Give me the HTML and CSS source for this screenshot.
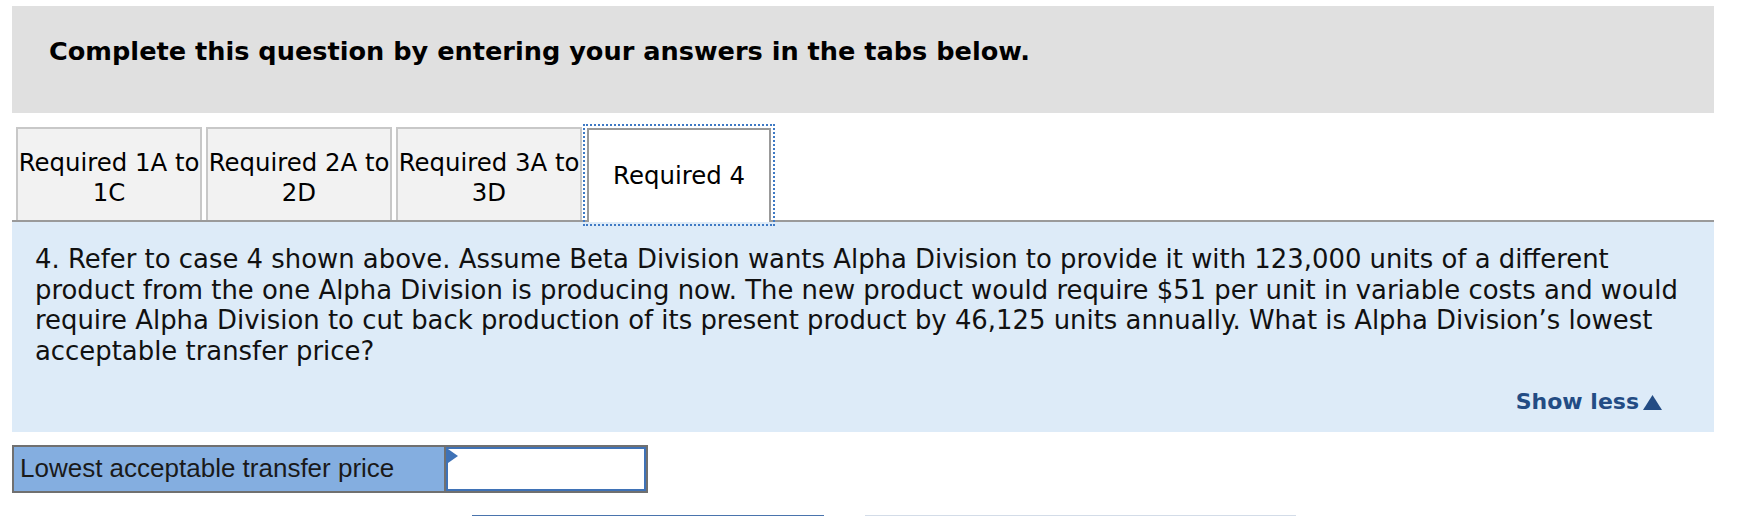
FILE: index.html
```html
<!DOCTYPE html>
<html lang="en">
<head>
<meta charset="utf-8">
<title>Required 4</title>
<link rel="stylesheet" href="styles.css">
</head>
<body>
<div class="page">
  <div class="header">Complete this question by entering your answers in the tabs below.</div>

  <div class="tabs">
    <div class="tab">Required 1A to<br>1C</div>
    <div class="tab">Required 2A to<br>2D</div>
    <div class="tab">Required 3A to<br>3D</div>
    <div class="tab tab-active">Required 4</div>
  </div>

  <div class="panel">
    <p class="question">4. Refer to case 4 shown above. Assume Beta Division wants Alpha Division to provide it with 123,000 units of a different<br>product from the one Alpha Division is producing now. The new product would require $51 per unit in variable costs and would<br>require Alpha Division to cut back production of its present product by 46,125 units annually. What is Alpha Division’s lowest<br>acceptable transfer price?</p>
    <div class="toggle"><span class="toggle-link">Show less<svg class="toggle-arrow" width="19" height="15" viewBox="0 0 19 15"><polygon points="9.5,0 19,15 0,15" fill="#234c84"/></svg></span></div>
  </div>

  <div class="answer">
    <div class="answer-label">Lowest acceptable transfer price</div>
    <div class="answer-cell">
      <input class="answer-input" type="text" aria-label="Lowest acceptable transfer price">
      <span class="answer-flag"></span>
    </div>
  </div>

  <div class="nav">
    <div class="nav-btn nav-prev"></div>
    <div class="nav-btn nav-next"></div>
  </div>
</div>
</body>
</html>
```

FILE: styles.css
```css
html, body {
  margin: 0;
  padding: 0;
  background: #ffffff;
}

body {
  font-family: "DejaVu Sans", Verdana, sans-serif;
  color: #111111;
}

.page {
  width: 1702px;
  padding: 6px 0 0 12px;
}

.header {
  box-sizing: border-box;
  height: 107px;
  background: #e0e0e0;
  padding: 30px 0 0 37px;
  font-size: 25.6px;
  line-height: 30px;
  font-weight: bold;
  color: #000000;
}

.tabs {
  display: flex;
  align-items: flex-end;
  box-sizing: content-box;
  height: 107px;
  padding-left: 4px;
  gap: 4px;
  border-bottom: 2px solid #9a9a9a;
}

.tab {
  box-sizing: border-box;
  width: 186px;
  height: 93px;
  padding-top: 6px;
  background: #f2f2f2;
  border: 2px solid #c8c8c8;
  border-bottom: 0;
  display: flex;
  align-items: center;
  justify-content: center;
  text-align: center;
  white-space: nowrap;
  font-size: 24.4px;
  line-height: 30px;
  color: #000000;
}

.tab-active {
  width: 184px;
  height: 94px;
  margin-left: 1px;
  margin-bottom: -2px;
  padding-top: 0;
  background: #ffffff;
  border: 2px solid #999999;
  border-bottom: 0;
  outline: 2px dotted #3e79c4;
  outline-offset: 2px;
}

.panel {
  background: #ddebf8;
  padding: 22px 52px 16px 23px;
  font-size: 25.9px;
  line-height: 30.7px;
}

.question {
  margin: 0;
  white-space: nowrap;
  color: #111111;
}

.toggle {
  margin-top: 19px;
  text-align: right;
  line-height: 28px;
}

.toggle-link {
  font-weight: bold;
  color: #234c84;
  font-size: 22px;
}

.toggle-arrow {
  margin-left: 4px;
  vertical-align: -1px;
}

.answer {
  display: flex;
  box-sizing: border-box;
  width: 636px;
  height: 48px;
  margin-top: 13px;
  border: 2px solid #707070;
}

.answer-label {
  box-sizing: border-box;
  width: 432px;
  padding-left: 6px;
  background: #84aee0;
  border-right: 2px solid #707070;
  display: flex;
  align-items: center;
  font-family: "Liberation Sans", Arial, sans-serif;
  font-size: 26px;
  color: #1a1a1a;
}

.answer-cell {
  position: relative;
  flex: 1;
  display: flex;
}

.answer-input {
  box-sizing: border-box;
  width: 100%;
  height: 100%;
  margin: 0;
  border: 2px solid #3f72b6;
  background: #ffffff;
  outline: none;
}

.answer-flag {
  position: absolute;
  left: 2px;
  top: 2px;
  width: 0;
  height: 0;
  border-top: 7px solid transparent;
  border-bottom: 7px solid transparent;
  border-left: 10px solid #3f72b6;
}

.nav {
  display: flex;
  margin-top: 22px;
}

.nav-btn {
  height: 40px;
  background: #ffffff;
}

.nav-prev {
  width: 352px;
  margin-left: 460px;
  border-top: 2px solid #4a74ad;
}

.nav-next {
  width: 431px;
  margin-left: 41px;
  border-top: 2px solid #d3dce8;
}
```
